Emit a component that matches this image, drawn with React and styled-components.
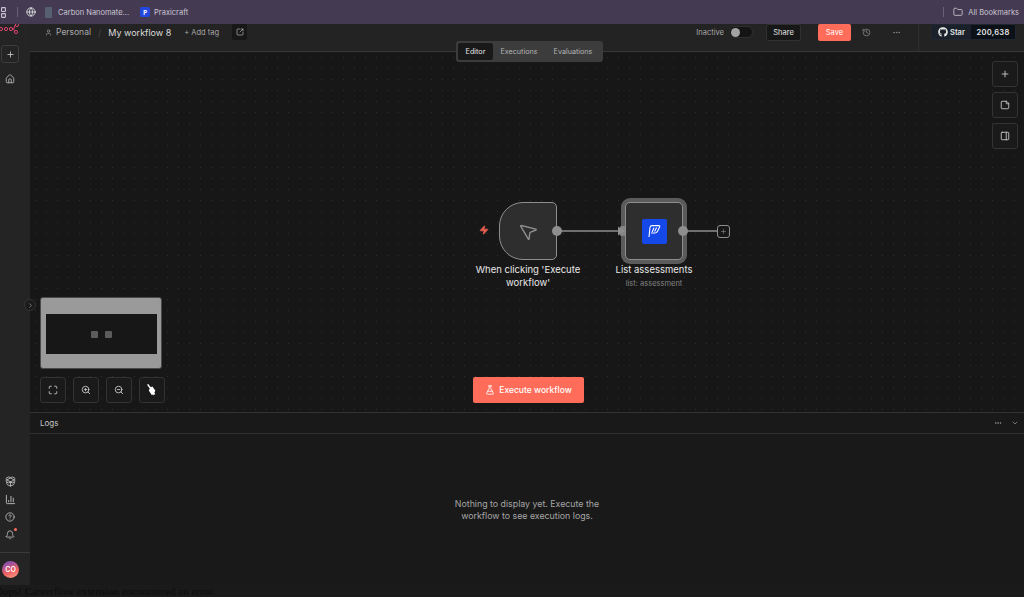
import React from "react";
import styled, { createGlobalStyle } from "styled-components";
import {
  Bell,
  ChartColumn,
  ChevronDown,
  ChevronRight,
  CircleHelp,
  Ellipsis,
  FlaskConical,
  Folder,
  Globe,
  History,
  House,
  LayoutGrid,
  Maximize,
  MousePointer2,
  PackageOpen,
  PanelRight,
  Plus,
  SquareArrowOutUpRight,
  StickyNote,
  User,
  Zap,
  ZoomIn,
  ZoomOut,
} from "lucide-react";
import { FaGithub } from "react-icons/fa";

const GlobalStyle = createGlobalStyle`
  html, body {
    margin: 0;
    padding: 0;
    background: #1a1a1a;
    overflow: hidden;
  }
  * { box-sizing: border-box; }
`;

const Page = styled.div`
  width: 1024px;
  height: 597px;
  display: flex;
  flex-direction: column;
  overflow: hidden;
  font-family: Inter, "Liberation Sans", sans-serif;
  color: #e4e4e4;
`;

const BookmarkBar = styled.div`
  height: 24px;
  flex: none;
  display: flex;
  align-items: center;
  padding-right: 5px;
  background: #443a52;
  color: #cbc6d3;
  font-size: 7.5px;
  position: relative;
  z-index: 3;
`;

const AppsIcon = styled.div`
  width: 17px;
  margin-left: -6px;
  margin-right: 6px;
  display: flex;
`;

const BarDivider = styled.div`
  width: 1px;
  height: 10px;
  background: #6a6078;
`;

const Bookmark = styled.div`
  display: flex;
  align-items: center;
  gap: ${(p) => p.$gap || 4}px;
  margin-left: ${(p) => p.$left || 0}px;
`;

const DocIcon = styled.div`
  width: 7px;
  height: 11px;
  border-radius: 1px;
  background: #57606f;
`;

const BlueFav = styled.div`
  width: 10px;
  height: 10px;
  border-radius: 2px;
  background: #2348e0;
  color: #fff;
  font-size: 6px;
  font-weight: 700;
  display: flex;
  align-items: center;
  justify-content: center;
`;

const Spacer = styled.div`
  flex: 1;
`;

const Main = styled.div`
  height: 561px;
  flex: none;
  display: flex;
`;

const Sidebar = styled.div`
  width: 30px;
  flex: none;
  display: flex;
  flex-direction: column;
  background: #242424;
  position: relative;
`;

const LogoClip = styled.div`
  height: 14px;
  width: 20px;
  overflow: hidden;
`;

const SideBtn = styled.div`
  width: 18px;
  height: 18px;
  margin: 7px 0 0 1px;
  border: 1px solid #3d3d3d;
  border-radius: 3px;
  display: flex;
  align-items: center;
  justify-content: center;
  color: #d8d8d8;
`;

const SideIcon = styled.div`
  width: 20px;
  height: 18px;
  display: flex;
  align-items: center;
  justify-content: center;
  color: #bdbdbd;
  position: relative;
`;

const HomeSlot = styled.div`
  margin-top: 7px;
`;

const SideBottom = styled.div`
  margin-top: auto;
  display: flex;
  flex-direction: column;
`;

const RedDot = styled.span`
  position: absolute;
  top: 2px;
  right: 3px;
  width: 3px;
  height: 3px;
  border-radius: 50%;
  background: #ff6d5a;
`;

const SideFoot = styled.div`
  margin-top: 8px;
  height: 33px;
  border-top: 1px solid #3a3a3a;
  display: flex;
  align-items: center;
  padding-left: 2px;
`;

const Avatar = styled.div`
  width: 17px;
  height: 17px;
  border-radius: 50%;
  background: linear-gradient(160deg, #6a4bc4 0%, #ef5f5f 60%, #f5a48c 100%);
  color: #fff;
  font-size: 7px;
  font-weight: 600;
  display: flex;
  align-items: center;
  justify-content: center;
`;

const Content = styled.div`
  flex: 1;
  min-width: 0;
  display: flex;
  flex-direction: column;
  position: relative;
`;

const Header = styled.div`
  height: 28px;
  flex: none;
  display: flex;
  align-items: center;
  padding: 0 8px 11px 15px;
  background: #232323;
  border-bottom: 1px solid #383838;
`;

const Crumb = styled.div`
  display: flex;
  align-items: center;
  gap: 4px;
  font-size: 8.5px;
  color: #a8a8a8;
`;

const Slash = styled.span`
  margin: 0 7px;
  font-size: 9px;
  color: #484848;
`;

const WorkflowName = styled.span`
  font-size: 9px;
  color: #dcdcdc;
`;

const AddTag = styled.span`
  margin-left: 13px;
  font-size: 7.5px;
  color: #a8a8a8;
`;

const OpenBtn = styled.div`
  width: 15px;
  height: 16px;
  margin-left: 13px;
  background: #171717;
  border-radius: 2px;
  color: #bdbdbd;
  display: flex;
  align-items: center;
  justify-content: center;
`;

const InactiveLabel = styled.span`
  font-size: 7.5px;
  color: #a8a8a8;
`;

const Toggle = styled.div`
  width: 24px;
  height: 12px;
  margin-left: 5px;
  padding: 1px;
  border-radius: 6px;
  background: #141414;
  border: 1px solid #2e2e2e;
`;

const Knob = styled.div`
  width: 9px;
  height: 9px;
  border-radius: 50%;
  background: #a3a3a3;
`;

const ShareBtn = styled.div`
  width: 35px;
  height: 17px;
  margin-left: 13px;
  background: #171717;
  border: 1px solid #303030;
  border-radius: 2px;
  font-size: 7.5px;
  color: #e4e4e4;
  display: flex;
  align-items: center;
  justify-content: center;
`;

const SaveBtn = styled(ShareBtn)`
  width: 33px;
  margin-left: 17px;
  background: #ff6d5a;
  border: none;
  color: #fff;
`;

const HeadIcon = styled.div`
  margin-left: ${(p) => p.$left}px;
  color: #8b8b8b;
  display: flex;
`;

const HeadDivider = styled.div`
  width: 1px;
  height: 27px;
  margin: 11px 12px 0 17px;
  background: #2f2f2f;
`;

const Github = styled.div`
  height: 16px;
  display: flex;
  border-radius: 2px;
  overflow: hidden;
  border: 1px solid #1f2630;
  font-size: 7.5px;
  font-weight: 600;
  color: #e4e4e4;
`;

const GithubStar = styled.div`
  width: 39px;
  background: #1a212b;
  display: flex;
  align-items: center;
  justify-content: center;
  gap: 2px;
`;

const GithubCount = styled.div`
  width: 44px;
  background: #0c1118;
  display: flex;
  align-items: center;
  justify-content: center;
  letter-spacing: 0.3px;
`;

const Tabs = styled.div`
  position: absolute;
  top: 17px;
  left: 426px;
  width: 147px;
  height: 21px;
  z-index: 2;
  display: flex;
  align-items: center;
  padding: 0 2px;
  border-radius: 3px;
  background: #3c3c3c;
  font-size: 7.2px;
`;

const Tab = styled.div`
  height: 17px;
  width: ${(p) => p.$w}px;
  border-radius: 2px;
  display: flex;
  align-items: center;
  justify-content: center;
  background: ${(p) => (p.$active ? "#191919" : "transparent")};
  color: ${(p) => (p.$active ? "#e8e8e8" : "#b5b5b5")};
`;

const Canvas = styled.div`
  height: 360px;
  flex: none;
  position: relative;
  background-color: #171717;
  background-image: radial-gradient(#303030 0.7px, transparent 0.8px);
  background-size: 11px 11px;
`;

const CollapseBtn = styled.div`
  position: absolute;
  left: -6px;
  top: 247px;
  width: 12px;
  height: 12px;
  border-radius: 50%;
  border: 1px solid #333;
  background: #1b1b1b;
  color: #a8a8a8;
  display: flex;
  align-items: center;
  justify-content: center;
`;

const ToolColumn = styled.div`
  position: absolute;
  top: 9px;
  right: 6px;
  display: flex;
  flex-direction: column;
  gap: 5px;
`;

const ToolBtn = styled.div`
  width: 26px;
  height: 26px;
  border: 1px solid #333;
  border-radius: 3px;
  background: #1a1a1a;
  color: #d4d4d4;
  display: flex;
  align-items: center;
  justify-content: center;
`;

const MiniMap = styled.div`
  position: absolute;
  left: 10px;
  top: 245px;
  width: 122px;
  height: 72px;
  padding: 16px 4px 16px 5px;
  background: #9a9a9a;
  border: 1px solid #4a4a4a;
  border-radius: 3px;
`;

const MiniInner = styled.div`
  height: 40px;
  background: #171717;
  display: flex;
  align-items: center;
  justify-content: center;
  gap: 7px;
`;

const MiniNode = styled.div`
  width: 7px;
  height: 7px;
  background: #5c5c5c;
  border-radius: 1px;
`;

const ZoomRow = styled.div`
  position: absolute;
  left: 10px;
  top: 325px;
  display: flex;
  gap: 7px;
`;

const ExecuteBtn = styled.div`
  position: absolute;
  left: 443px;
  top: 325px;
  width: 111px;
  height: 26px;
  border-radius: 2px;
  background: #ff6d5a;
  color: #fff;
  font-size: 8.5px;
  font-weight: 500;
  display: flex;
  align-items: center;
  justify-content: center;
  gap: 4px;
`;

const Edges = styled.svg`
  position: absolute;
  inset: 0;
  width: 100%;
  height: 100%;
`;

const WorkflowNode = styled.div`
  position: absolute;
  left: ${(p) => p.$x}px;
  top: ${(p) => p.$y}px;
  width: 58px;
  height: 58px;
  background: #2e2e2e;
  border: 1.5px solid #8e8e8e;
  border-radius: ${(p) => (p.$trigger ? "24px 5px 5px 24px" : "5px")};
  display: flex;
  align-items: center;
  justify-content: center;
  color: #8e8e8e;
  ${(p) => p.$selected && "box-shadow: 0 0 0 4px #5b5b5b;"}
`;

const AppIcon = styled.div`
  width: 25px;
  height: 25px;
  border-radius: 2px;
  background: #1548e8;
  display: flex;
  align-items: center;
  justify-content: center;
`;

const Bolt = styled.div`
  position: absolute;
  left: 449px;
  top: 173px;
  color: #e8604f;
  display: flex;
`;

const NodeLabel = styled.div`
  position: absolute;
  left: ${(p) => p.$x}px;
  top: 212px;
  width: 120px;
  text-align: center;
  font-size: 9.5px;
  line-height: 12.5px;
  color: #e8e8e8;
`;

const NodeSub = styled.div`
  margin-top: 1px;
  font-size: 7.5px;
  line-height: 12px;
  color: #828282;
`;

const AddBox = styled.div`
  position: absolute;
  left: 687px;
  top: 173px;
  width: 13px;
  height: 13px;
  border: 1.5px solid #8e8e8e;
  border-radius: 3px;
  color: #8e8e8e;
  display: flex;
  align-items: center;
  justify-content: center;
`;

const Logs = styled.div`
  flex: 1;
  display: flex;
  flex-direction: column;
  background: #191919;
  border-top: 1px solid #333;
`;

const LogsHeader = styled.div`
  height: 21px;
  flex: none;
  display: flex;
  align-items: center;
  gap: 9px;
  padding: 0 5px 0 10px;
  border-bottom: 1px solid #303030;
  font-size: 8px;
  color: #c8c8c8;
`;

const LogsBody = styled.div`
  flex: 1;
  display: flex;
  align-items: center;
  justify-content: center;
  text-align: center;
  font-size: 8.8px;
  line-height: 11.5px;
  color: #a5a5a5;
`;

const ErrorLine = styled.div`
  margin-left: -5px;
  font-family: "Liberation Serif", serif;
  font-size: 11px;
  line-height: 12px;
  color: #0c0c0c;
  white-space: nowrap;
`;

const Logo = () => (
  <svg width="20" height="24" viewBox="0 0 20 24" style={{ marginTop: -5 }}>
    <g fill="none" stroke="#d9446e" strokeWidth="1">
      <circle cx="1" cy="10" r="1.6" />
      <circle cx="6" cy="10" r="1.6" />
      <circle cx="11" cy="10" r="1.6" />
      <circle cx="17" cy="6" r="1.6" />
      <circle cx="16" cy="13" r="1.6" />
      <path d="M12.5 10h1c1 0 1-4 2-4M12.5 10h1c1 0 .8 3 1 3" />
    </g>
  </svg>
);

const BroomIcon = () => (
  <svg width="12" height="12" viewBox="0 0 12 12" fill="#fff">
    <path d="M1 .8 2.2 0l2.6 3.2 1.6-.6 3 4.2-1 1.4.9 2.6-1.6-.6-.2 1.4-1.2-1.2-.6.6L2.8 6.6l1-2.2z" />
  </svg>
);

const FeatherMark = () => (
  <svg width="14" height="14" viewBox="0 0 14 14" fill="none" stroke="#fff" strokeWidth="1.1">
    <path d="M2 13 3 3.5C3.2 2.2 4 1.6 5.2 1.6h6.6c.9 0 1.2.8.8 1.5l-2.2 4.4c-.5 1-1.3 1.5-2.4 1.5H4" />
    <path d="M5.2 8 7 3.6M7.6 7.6 9.6 3.6" />
  </svg>
);

const App = () => (
  <Page>
    <GlobalStyle />
    <BookmarkBar>
      <AppsIcon>
        <LayoutGrid size={13} />
      </AppsIcon>
      <BarDivider />
      <Bookmark $left={8} $gap={0}>
        <Globe size={10} color="#e4e4e4" />
      </Bookmark>
      <Bookmark $left={9} $gap={6}>
        <DocIcon />
        Carbon Nanomate...
      </Bookmark>
      <Bookmark $left={11} $gap={4}>
        <BlueFav>P</BlueFav>
        Praxicraft
      </Bookmark>
      <Spacer />
      <BarDivider />
      <Bookmark $left={9} $gap={5}>
        <Folder size={10} />
        All Bookmarks
      </Bookmark>
    </BookmarkBar>

    <Main>
      <Sidebar>
        <LogoClip>
          <Logo />
        </LogoClip>
        <SideBtn>
          <Plus size={9} />
        </SideBtn>
        <HomeSlot>
          <SideIcon>
            <House size={10} />
          </SideIcon>
        </HomeSlot>
        <SideBottom>
          <SideIcon>
            <PackageOpen size={11} />
          </SideIcon>
          <SideIcon>
            <ChartColumn size={11} />
          </SideIcon>
          <SideIcon>
            <CircleHelp size={10} />
          </SideIcon>
          <SideIcon>
            <Bell size={10} />
            <RedDot />
          </SideIcon>
          <SideFoot>
            <Avatar>CO</Avatar>
          </SideFoot>
        </SideBottom>
      </Sidebar>

      <Content>
        <Header>
          <Crumb>
            <User size={7} />
            Personal
          </Crumb>
          <Slash>/</Slash>
          <WorkflowName>My workflow 8</WorkflowName>
          <AddTag>+ Add tag</AddTag>
          <OpenBtn>
            <SquareArrowOutUpRight size={8} />
          </OpenBtn>
          <Spacer />
          <InactiveLabel>Inactive</InactiveLabel>
          <Toggle>
            <Knob />
          </Toggle>
          <ShareBtn>Share</ShareBtn>
          <SaveBtn>Save</SaveBtn>
          <HeadIcon $left={11}>
            <History size={9} />
          </HeadIcon>
          <HeadIcon $left={21}>
            <Ellipsis size={9} />
          </HeadIcon>
          <HeadDivider />
          <Github>
            <GithubStar>
              <FaGithub size={10} />
              Star
            </GithubStar>
            <GithubCount>200,638</GithubCount>
          </Github>
        </Header>

        <Tabs>
          <Tab $active $w={35}>Editor</Tab>
          <Tab $w={52}>Executions</Tab>
          <Tab $w={56}>Evaluations</Tab>
        </Tabs>

        <Canvas>
          <CollapseBtn>
            <ChevronRight size={7} />
          </CollapseBtn>

          <Edges>
            <path d="M527 179H590" stroke="#8e8e8e" strokeWidth="1.5" fill="none" />
            <path d="M653 179H687" stroke="#8e8e8e" strokeWidth="1.5" fill="none" />
          </Edges>

          <Bolt>
            <Zap size={10} fill="#e8604f" />
          </Bolt>
          <WorkflowNode $trigger $x={469} $y={150}>
            <MousePointer2 size={21} strokeWidth={1.6} style={{ transform: "rotate(-8deg)" }} />
          </WorkflowNode>
          <WorkflowNode $selected $x={595} $y={150}>
            <AppIcon>
              <FeatherMark />
            </AppIcon>
          </WorkflowNode>
          <svg
            width="740"
            height="200"
            viewBox="0 0 740 200"
            style={{ position: "absolute", left: 0, top: 0 }}
          >
            <circle cx="527" cy="179" r="5" fill="#8e8e8e" />
            <path d="M588 174.5 595 179 588 183.5z" fill="#8e8e8e" />
            <rect x="590" y="174" width="5" height="10" rx="1" fill="#8e8e8e" opacity="0.8" />
            <circle cx="653" cy="179" r="5" fill="#8e8e8e" />
          </svg>
          <AddBox>
            <Plus size={7} />
          </AddBox>
          <NodeLabel $x={438}>When clicking 'Execute workflow'</NodeLabel>
          <NodeLabel $x={564}>
            List assessments
            <NodeSub>list: assessment</NodeSub>
          </NodeLabel>

          <ToolColumn>
            <ToolBtn>
              <Plus size={10} />
            </ToolBtn>
            <ToolBtn>
              <StickyNote size={10} />
            </ToolBtn>
            <ToolBtn>
              <PanelRight size={10} />
            </ToolBtn>
          </ToolColumn>

          <MiniMap>
            <MiniInner>
              <MiniNode />
              <MiniNode />
            </MiniInner>
          </MiniMap>

          <ZoomRow>
            <ToolBtn>
              <Maximize size={10} />
            </ToolBtn>
            <ToolBtn>
              <ZoomIn size={10} />
            </ToolBtn>
            <ToolBtn>
              <ZoomOut size={10} />
            </ToolBtn>
            <ToolBtn>
              <BroomIcon />
            </ToolBtn>
          </ZoomRow>

          <ExecuteBtn>
            <FlaskConical size={10} />
            Execute workflow
          </ExecuteBtn>
        </Canvas>

        <Logs>
          <LogsHeader>
            Logs
            <Spacer />
            <Ellipsis size={8} color="#a0a0a0" />
            <ChevronDown size={8} color="#a0a0a0" />
          </LogsHeader>
          <LogsBody>
            Nothing to display yet. Execute the
            <br />
            workflow to see execution logs.
          </LogsBody>
        </Logs>
      </Content>
    </Main>

    <ErrorLine>Oops! Careerflow extension encountered an error.</ErrorLine>
  </Page>
);

export default App;
